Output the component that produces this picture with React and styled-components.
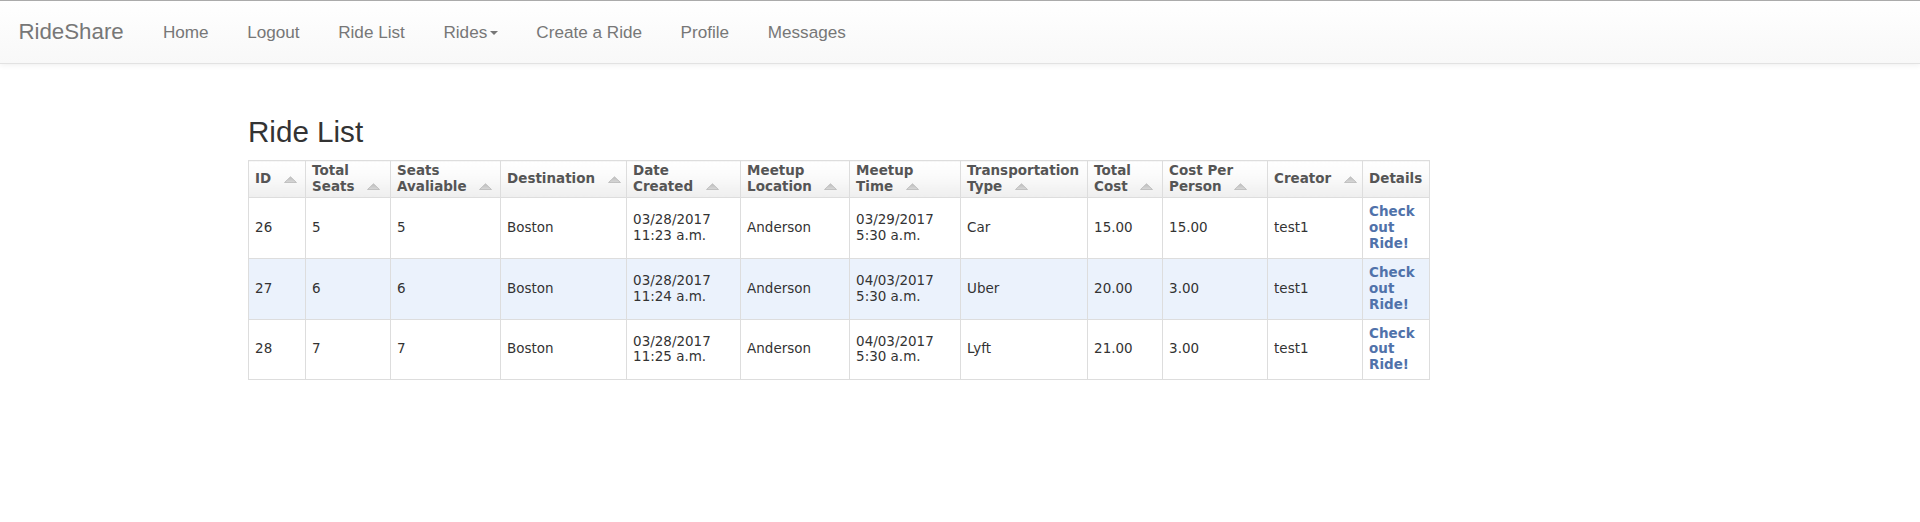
import React from 'react'
import styled, { createGlobalStyle } from 'styled-components'

const GlobalStyle = createGlobalStyle`
body{
margin:0;
background:#fff;
color:#333;
font-family:"Liberation Sans", Arial, sans-serif;
}
`

const Navbar = styled.nav`
display:flex;
align-items:flex-start;
height:62px;
border-top:1px solid #ababab;
border-bottom:1px solid #e2e2e2;
background-image:linear-gradient(to bottom,#ffffff 0,#f8f8f8 100%);
box-shadow:0 1px 6px rgba(0,0,0,0.07);
`

const Brand = styled.a`
padding:18.6px 18.4px;
font-size:22.3px;
line-height:24.5px;
color:#777;
text-decoration:none;
`

const NavList = styled.ul`
display:flex;
list-style:none;
margin:0 0 0 1.5px;
padding:0;
`

const NavLink = styled.a`
display:block;
padding:18.6px 19.3px;
font-size:17.14px;
line-height:24.5px;
color:#777;
text-decoration:none;
`

const Caret = styled.span`
display:inline-block;
width:0;
height:0;
margin-left:2.5px;
vertical-align:middle;
border-top:4.9px solid #777;
border-left:4.9px solid transparent;
border-right:4.9px solid transparent;
`

const Main = styled.main`
padding:51px 0 0 248px;
`

const Title = styled.h2`
margin:0 0 12px;
font-size:29.6px;
font-weight:400;
line-height:33px;
color:#333;
`

const Table = styled.table`
width:1181px;
table-layout:fixed;
border-collapse:collapse;
border:1px solid #ddd;
font-family:"DejaVu Sans", Verdana, sans-serif;
font-size:13.47px;
line-height:15.8px;
`

const HeadCell = styled.th`
padding:2.2px 6.1px;
text-align:left;
vertical-align:middle;
white-space:nowrap;
font-weight:700;
color:#555;
border:1px solid #ddd;
background-image:linear-gradient(to bottom,#ffffff 0%,#fafafa 45%,#eeeeee 100%);
`

const Row = styled.tr`
background:${p => (p.$striped ? '#ebf2fc' : '#fff')};
`

const Cell = styled.td`
padding:6.2px 6.1px;
vertical-align:middle;
color:#333;
border:1px solid #ddd;
`

const DetailLink = styled.a`
font-weight:700;
color:#5072aa;
text-decoration:none;
`

const SortIcon = styled.svg`
display:inline-block;
margin-left:12.5px;
vertical-align:middle;
`

const Sort = () => (
  <SortIcon width="13" height="7" viewBox="0 0 13 7">
    <defs>
      <linearGradient id="sortg" x1="0" y1="0" x2="0" y2="1">
        <stop offset="0" stopColor="#bdbdbd" />
        <stop offset="1" stopColor="#d8d8d8" />
      </linearGradient>
    </defs>
    <polygon points="0.5,6.5 6.5,0.8 12.5,6.5" fill="url(#sortg)" stroke="#b8b8b8" strokeWidth="0.8" />
  </SortIcon>
)

const widths = [57, 85, 110, 126, 114, 109, 111, 127, 75, 105, 95, 67]

const headers = [
  ['ID'],
  ['Total', 'Seats'],
  ['Seats', 'Avaliable'],
  ['Destination'],
  ['Date', 'Created'],
  ['Meetup', 'Location'],
  ['Meetup', 'Time'],
  ['Transportation', 'Type'],
  ['Total', 'Cost'],
  ['Cost Per', 'Person'],
  ['Creator'],
]

const rides = [
  { id: 26, total: 5, avail: 5, dest: 'Boston', created: ['03/28/2017', '11:23 a.m.'], loc: 'Anderson', time: ['03/29/2017', '5:30 a.m.'], type: 'Car', cost: '15.00', per: '15.00', creator: 'test1' },
  { id: 27, total: 6, avail: 6, dest: 'Boston', created: ['03/28/2017', '11:24 a.m.'], loc: 'Anderson', time: ['04/03/2017', '5:30 a.m.'], type: 'Uber', cost: '20.00', per: '3.00', creator: 'test1' },
  { id: 28, total: 7, avail: 7, dest: 'Boston', created: ['03/28/2017', '11:25 a.m.'], loc: 'Anderson', time: ['04/03/2017', '5:30 a.m.'], type: 'Lyft', cost: '21.00', per: '3.00', creator: 'test1' },
]

const TwoLines = ({ lines }) => (
  <>
    {lines[0]}
    <br />
    {lines[1]}
  </>
)

const App = () => {
  return (
    <>
      <GlobalStyle />
      <Navbar>
        <Brand href="#">RideShare</Brand>
        <NavList>
          <li><NavLink href="#">Home</NavLink></li>
          <li><NavLink href="#">Logout</NavLink></li>
          <li><NavLink href="#">Ride List</NavLink></li>
          <li><NavLink href="#">Rides<Caret /></NavLink></li>
          <li><NavLink href="#">Create a Ride</NavLink></li>
          <li><NavLink href="#">Profile</NavLink></li>
          <li><NavLink href="#">Messages</NavLink></li>
        </NavList>
      </Navbar>
      <Main>
        <Title>Ride List</Title>
        <Table>
          <colgroup>
            {widths.map((w, i) => <col key={i} style={{ width: w }} />)}
          </colgroup>
          <thead>
            <tr>
              {headers.map((h, i) => (
                <HeadCell key={i}>
                  {h.length > 1 ? <>{h[0]}<br />{h[1]}</> : h[0]}
                  <Sort />
                </HeadCell>
              ))}
              <HeadCell>Details</HeadCell>
            </tr>
          </thead>
          <tbody>
            {rides.map((r, i) => (
              <Row key={r.id} $striped={i % 2 === 1}>
                <Cell>{r.id}</Cell>
                <Cell>{r.total}</Cell>
                <Cell>{r.avail}</Cell>
                <Cell>{r.dest}</Cell>
                <Cell><TwoLines lines={r.created} /></Cell>
                <Cell>{r.loc}</Cell>
                <Cell><TwoLines lines={r.time} /></Cell>
                <Cell>{r.type}</Cell>
                <Cell>{r.cost}</Cell>
                <Cell>{r.per}</Cell>
                <Cell>{r.creator}</Cell>
                <Cell>
                  <DetailLink href="#">Check<br />out<br />Ride!</DetailLink>
                </Cell>
              </Row>
            ))}
          </tbody>
        </Table>
      </Main>
    </>
  )
}

export default App
